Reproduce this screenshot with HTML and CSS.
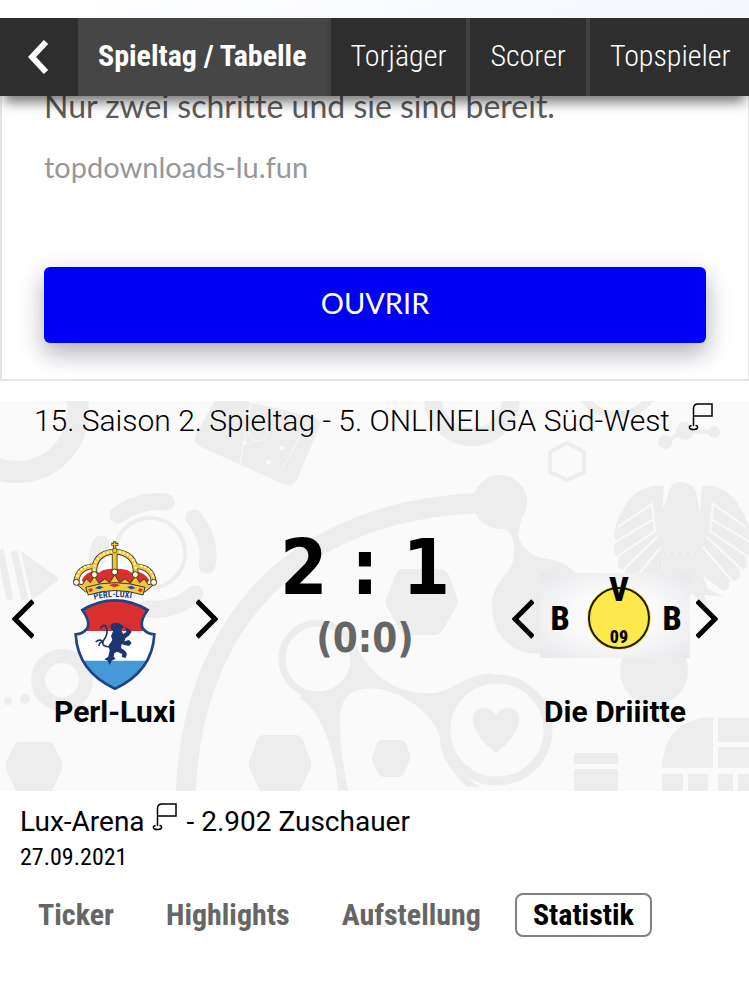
FILE: index.html
```html
<!DOCTYPE html>
<html lang="de">
<head>
    <meta charset="UTF-8">
    <meta name="viewport" content="width=device-width, initial-scale=1.0">
    <title>Perl-Luxi - Die Driiitte | Spieltag</title>
    <link rel="stylesheet" href="styles.css">
</head>
<body>
    <svg class="sprite" aria-hidden="true">
        <symbol id="flag" viewBox="0 0 25 28">
            <path d="M5.5 23V5.500Q5.500 1 10 1H24V13H6" fill="none" stroke="#000" stroke-width="1.500"/>
            <path d="M3.500 22.500C1 23 .5 25 2.500 26C4.500 27 8.500 26.500 9.500 25C10 23.500 9 22.500 7.500 22.500" fill="none" stroke="#000" stroke-width="1.500"/>
        </symbol>
        <symbol id="prev" viewBox="0 0 22 40">
            <path d="M21 2L3 20L21 38" fill="none" stroke="#000" stroke-width="5"/>
        </symbol>
        <symbol id="next" viewBox="0 0 22 40">
            <path d="M1 2L19 20L1 38" fill="none" stroke="#000" stroke-width="5"/>
        </symbol>
    </svg>

    <header class="topbar">
        <button class="back" type="button" aria-label="Zurück">
            <svg width="22" height="34" viewBox="0 0 22 34"><path d="M18 2L4 17L18 32" fill="none" stroke="#fff" stroke-width="6"/></svg>
        </button>
        <nav class="main-nav">
            <a class="active" href="#">Spieltag / Tabelle</a>
            <a href="#">Torjäger</a>
            <a href="#">Scorer</a>
            <a href="#">Topspieler</a>
        </nav>
    </header>

    <aside class="ad">
        <p class="ad-text">Nur zwei schritte und sie sind bereit.</p>
        <p class="ad-url">topdownloads-lu.fun</p>
        <button class="ad-button" type="button">OUVRIR</button>
    </aside>

    <section class="match">
        <svg class="pattern" viewBox="0 0 749 390" preserveAspectRatio="xMidYMid slice" aria-hidden="true">
            <g fill="none" stroke="#ededed">
                <circle cx="17" cy="10" r="61" stroke-width="22"/>
                <circle cx="472" cy="-3" r="39" stroke-width="18"/>
                <circle cx="617" cy="-28" r="42" stroke-width="8"/>
                <circle cx="150" cy="152" r="35" stroke-width="4"/>
                <path d="M118 114Q140 98 166 101M194 117Q212 140 207 164M195 193Q174 211 146 208M101 172Q93 158 101 143" stroke-width="17" stroke-linecap="round"/>
                <circle cx="62" cy="279" r="24" stroke-width="14"/>
                <path d="M186 392C190 250 270 112 478 102" stroke-width="20"/>
                <path d="M567 42L584 51V71L567 79L550 71V51Z" stroke-width="4" stroke-linejoin="round"/>
                <circle cx="497" cy="329" r="51" stroke-width="9"/>
                <path d="M665 41L684 30L714 31" stroke-width="4"/>
                <path d="M0 148L10 199M14 150L25 199" stroke-width="7"/>
            </g>
            <g fill="#ededed">
                <path d="M218 -6L314 16Q322 19 319 26L297 79Q292 87 283 83L199 45Q192 41 196 33Z"/>
                <path d="M21 150L57 176Q60 179 56 181L32 199Z"/>
                <circle cx="8" cy="300" r="4"/>
                <circle cx="25" cy="298" r="5"/>
                <circle cx="500" cy="101" r="27"/>
                <path d="M502 126C514 132 516 144 513 160C510 175 492 180 492 205C492 235 512 253 540 253C570 253 588 230 588 205C588 175 565 160 548 158C530 156 520 145 518 133L522 115Z"/>
                <path d="M402 168H440Q446 168 449 174L457 197Q459 201 456 206L443 229Q440 234 434 234H409Q403 234 400 229L387 206Q384 201 387 196L396 173Q398 168 402 168Z"/>
                <path d="M264 334H296Q300 334 303 339L310 358Q312 363 310 368L300 390H260L250 368Q248 363 250 358L257 339Q259 334 264 334Z"/>
                <path d="M382 339H400Q404 339 406 342L410 354Q411 358 409 361L404 372Q402 376 398 376H384Q380 376 378 372L373 361Q371 358 373 354L377 342Q379 339 382 339Z"/>
                <path d="M20 341H48Q52 341 54 345L62 361Q63 365 62 368L52 390H16L6 368Q5 365 6 361L14 345Q16 341 20 341Z"/>
                <path transform="translate(240 119) scale(.3333)" d="M350 380C400 480 480 520 570 520C630 520 680 460 760 460V485C680 490 620 560 620 640C620 700 650 760 720 800H680C620 740 600 700 600 650C570 560 460 505 390 505C320 505 300 550 300 600C300 680 310 740 325 812H295C285 700 250 580 180 535L235 420Z"/>
                <path d="M496 352Q473 334 473 319Q473 307 484 307Q492 307 496 314Q500 307 508 307Q519 307 519 319Q519 334 496 352Z"/>
                <circle cx="665" cy="41" r="7"/>
                <circle cx="685" cy="30" r="9"/>
                <circle cx="714" cy="31" r="6"/>
                <circle cx="654" cy="270" r="34"/>
                <path d="M574 352H618V363H574ZM574 368H618V390H574Z"/>
                <path d="M713 316V367H662Q664 318 713 316ZM718 317H749V341H718ZM718 346H749V367H718ZM662 373H683V390H662ZM688 373H708V390H688ZM718 373H733V390H718ZM738 373H749V390H738Z"/>
                <!-- eagle -->
                <path d="M667 99Q669 81 680 81Q695 82 697 96L700 112V168L708 188L724 196L704 194L708 206L692 192L681 204L672 192L656 206L660 192L642 196L658 186L663 168L660 112Z"/>
                <path d="M664 85Q636 82 622 110Q614 124 614 137L618 140Q612 144 615 154L620 156Q615 162 620 168L626 169Q622 176 630 180L636 181Q634 188 642 190L662 172V112Z"/>
                <path d="M702 85Q728 82 742 110Q750 124 752 137L747 140Q753 144 750 154L745 156Q750 162 745 168L739 169Q743 176 735 180L729 181Q731 188 723 190L700 172V112Z"/>
            </g>
            <circle cx="318" cy="258" r="36" fill="#fafafa" stroke="#ededed" stroke-width="7"/>
            <g fill="none" stroke="#fafafa">
                <path d="M252 -2L240 63M281 70L308 20" stroke-width="1"/>
                <circle cx="258" cy="30" r="10"/>
                <path d="M244 42H245M281 47H282M268 61H269" stroke-width="4" stroke-linecap="round"/>
                <path d="M668 112H698M666 122H698M666 132H698M666 142H698M667 152H698" stroke-width="1" stroke-dasharray="2 6"/>
                <path d="M618 126L652 103L655 130L618 155M654 118L615 141M657 136L623 169M661 146L632 181M746 126L713 103L710 130L747 155M711 118L750 141M707 136L742 169M703 146L733 181" stroke-width="2"/>
            </g>
        </svg>

        <h1 class="match-title">
            15. Saison 2. Spieltag - 5. ONLINELIGA Süd-West
            <svg class="flag"><use href="#flag"/></svg>
        </h1>

        <div class="scoreboard">
            <div class="team">
                <div class="team-row">
                    <button class="arrow" type="button" aria-label="Vorheriges Spiel Perl-Luxi"><svg><use href="#prev"/></svg></button>
                    <svg class="crest" viewBox="222 30 252 450" role="img" aria-label="Perl-Luxi">
                        <!-- crown -->
                        <path d="M248 150Q270 116 300 128Q322 112 348 112Q376 112 397 128Q428 118 451 150L430 180H268Z" fill="#d9302f"/>
                        <path d="M300 104Q320 94 342 92V116Q318 116 302 124ZM354 92Q376 95 396 105V124Q380 116 354 116Z" fill="#fff"/>
                        <g fill="none" stroke="#3d3420" stroke-width="17">
                            <path d="M232 156Q235 112 286 108M464 156Q461 112 410 108"/>
                            <path d="M286 130Q282 70 347 64Q412 70 410 130M347 66V126"/>
                        </g>
                        <g fill="none" stroke="#edc63c" stroke-width="12">
                            <path d="M232 156Q235 112 286 108M464 156Q461 112 410 108"/>
                            <path d="M286 130Q282 70 347 64Q412 70 410 130M347 66V126"/>
                        </g>
                        <g fill="none" stroke="#fff3b4" stroke-width="7" stroke-linecap="round" stroke-dasharray="1 11">
                            <path d="M232 150Q236 110 280 106M464 150Q460 110 416 106"/>
                            <path d="M286 120Q284 70 347 64Q410 70 410 120"/>
                        </g>
                        <path d="M230 160L250 164L262 146L274 158L286 138L300 160L318 146L332 158L347 134L362 158L378 146L394 160L410 138L422 158L436 146L448 164L468 160L438 186Q348 156 260 186Z" fill="#edc63c" stroke="#3d3420" stroke-width="3"/>
                        <path d="M260 172Q348 144 438 172L432 195Q348 168 268 195Z" fill="#f0cc48" stroke="#3d3420" stroke-width="3"/>
                        <path d="M288 175L300 167L314 171L302 178ZM384 171L398 167L410 175L396 178Z" fill="#244a8c"/>
                        <path d="M330 166L347 160L364 166L347 172ZM268 178L278 174L282 182L272 187ZM416 182L422 174L432 178L426 187Z" fill="#d9302f"/>
                        <g fill="#fff8dc" stroke="#3d3420" stroke-width="3">
                            <circle cx="232" cy="157" r="9"/><circle cx="286" cy="134" r="9"/><circle cx="347" cy="126" r="9"/><circle cx="409" cy="134" r="9"/><circle cx="464" cy="157" r="9"/>
                        </g>
                        <path d="M347 34V62M337 43H358" stroke="#3d3420" stroke-width="9"/>
                        <path d="M347 36V62M339 43H356" stroke="#edc63c" stroke-width="4"/>
                        <circle cx="347" cy="62" r="7" fill="#edc63c" stroke="#3d3420" stroke-width="2"/>
                        <!-- name band -->
                        <path id="band" d="M286 209Q346 194 412 208" fill="none"/>
                        <text class="crest-text"><textPath href="#band">PERL-LUXI</textPath></text>
                        <!-- shield -->
                        <clipPath id="shield"><path d="M250 240Q298 211 348 211Q398 211 446 240Q420 276 432 296Q444 312 466 313Q460 424 348 476Q236 424 230 313Q252 312 264 296Q276 276 250 240Z"/></clipPath>
                        <g clip-path="url(#shield)">
                            <path d="M222 200H474V303H222Z" fill="#d9302f"/>
                            <path d="M222 303H474V392H222Z" fill="#fff"/>
                            <path d="M222 392H474V480H222Z" fill="#4599d6"/>
                        </g>
                        <path d="M250 240Q298 211 348 211Q398 211 446 240Q420 276 432 296Q444 312 466 313Q460 424 348 476Q236 424 230 313Q252 312 264 296Q276 276 250 240Z" fill="none" stroke="#1e4389" stroke-width="8"/>
                        <!-- lion -->
                        <path d="M336 281L350 278L364 281L376 292L366 298L372 312L382 306L378 292L388 296L398 305L391 316L380 324L376 334L390 330L398 339L390 348L376 345L368 342L366 354L378 362L384 372L380 384L368 381L370 372L354 365L346 370L344 380L350 386L338 392L332 405L326 392L316 388L328 380L332 360L328 348L340 330L336 318L342 304L334 294Z" fill="#1b3672"/>
                        <path d="M334 350Q308 352 312 334Q330 310 322 290Q312 280 304 296M312 334Q300 326 290 336M312 336Q300 336 300 348" fill="none" stroke="#1b3672" stroke-width="5"/>
                    </svg>
                    <button class="arrow" type="button" aria-label="Nächstes Spiel Perl-Luxi"><svg><use href="#next"/></svg></button>
                </div>
                <h2 class="team-name">Perl-Luxi</h2>
            </div>

            <div class="score">
                <div class="result">2 : 1</div>
                <div class="halftime">(0:0)</div>
            </div>

            <div class="team">
                <div class="team-row away">
                    <button class="arrow" type="button" aria-label="Vorheriges Spiel Die Driiitte"><svg><use href="#prev"/></svg></button>
                    <svg class="badge" viewBox="0 0 150 85" role="img" aria-label="Die Driiitte">
                        <radialGradient id="shade" r="70%"><stop offset="40%" stop-color="#fafafb"/><stop offset="100%" stop-color="#e9e9ec"/></radialGradient>
                        <path d="M0 0H150V85H0Z" fill="url(#shade)"/>
                        <circle cx="79" cy="45" r="32" fill="#fde94b"/>
                        <circle cx="79" cy="45" r="30" fill="none" stroke="#1c1a08" stroke-width="2"/>
                        <g class="badge-text">
                            <text x="20" y="57">B</text>
                            <text x="132" y="57">B</text>
                            <text x="79" y="28">V</text>
                            <text class="year" x="79" y="70">09</text>
                        </g>
                    </svg>
                    <button class="arrow" type="button" aria-label="Nächstes Spiel Die Driiitte"><svg><use href="#next"/></svg></button>
                </div>
                <h2 class="team-name">Die Driiitte</h2>
            </div>
        </div>
    </section>

    <section class="info">
        <p class="stadium">Lux-Arena <svg class="flag"><use href="#flag"/></svg> - 2.902 Zuschauer</p>
        <p class="date">27.09.2021</p>
    </section>

    <nav class="tabs">
        <a href="#">Ticker</a>
        <a href="#">Highlights</a>
        <a href="#">Aufstellung</a>
        <a class="active" href="#">Statistik</a>
    </nav>
</body>
</html>
```
FILE: styles.css
```css
* {
    box-sizing: border-box;
}
body {
    margin: 0;
    padding-top: 18px;
    background: #fff linear-gradient(90deg, #fff, #f5f7ff) no-repeat;
    background-size: 100% 18px;
    color: #000;
    font-family: Roboto, sans-serif;
    overflow-x: hidden;
}
h1, h2, p {
    margin: 0;
}
a {
    text-decoration: none;
}
button {
    border: none;
    padding: 0;
    cursor: pointer;
}
.sprite {
    display: none;
}

/* top navigation */
.topbar {
    position: relative;
    z-index: 2;
    display: flex;
    height: 78px;
    background: #2e2e2e;
    box-shadow: 0 10px 12px -4px rgba(0, 0, 0, 0.55);
}
.back {
    flex: 0 0 78px;
    display: flex;
    align-items: center;
    justify-content: center;
    background: none;
}
.main-nav {
    display: flex;
    flex: 1;
    overflow: hidden;
    font-family: "Roboto Condensed", Roboto, sans-serif;
    font-size: 30px;
    font-weight: 300;
    line-height: 76px;
    white-space: nowrap;
}
.main-nav a {
    padding: 0 20px;
    border-right: 4px solid #424242;
    color: #fff;
}
.main-nav a:last-child {
    border-right: none;
}
.main-nav .active {
    background: #464646;
    font-weight: 700;
}

/* ad */
.ad {
    margin-top: -26px;
    padding: 18px 42px 36px;
    border: 2px solid #e4e4e6;
    border-right-width: 1px;
    font-family: Lato, sans-serif;
    font-variant-ligatures: none;
}
.ad-text {
    color: #5c5c5c;
    font-size: 32px;
    line-height: 32px;
}
.ad-url {
    margin: 28px 0 83px;
    color: #979797;
    font-size: 29px;
    line-height: 34px;
}
.ad-button {
    display: block;
    width: 100%;
    height: 76px;
    padding-bottom: 6px;
    border-radius: 6px;
    background: #0000f5;
    box-shadow: 0 10px 24px rgba(20, 20, 50, 0.35);
    color: #fff;
    font-family: Lato, sans-serif;
    font-size: 29px;
}

/* match */
.match {
    position: relative;
    margin-top: 20px;
    padding-bottom: 61px;
    background: #fafafa;
    overflow: hidden;
}
.pattern {
    position: absolute;
    top: 0;
    left: 0;
    width: 100%;
    height: 100%;
}
.match-title,
.scoreboard {
    position: relative;
}
.match-title {
    display: flex;
    align-items: flex-start;
    justify-content: center;
    gap: 18px;
    padding-right: 2px;
    font-size: 30px;
    font-weight: 300;
    line-height: 40px;
    white-space: nowrap;
}
.flag {
    width: 25px;
    height: 28px;
}
.match-title .flag {
    margin-top: 2px;
}
.scoreboard {
    display: flex;
    justify-content: space-between;
    padding: 86px 31px 0 12px;
}
.team {
    width: 206px;
    padding-top: 13px;
}
.team-row {
    display: flex;
    align-items: center;
    justify-content: space-between;
    height: 150px;
}
.away {
    justify-content: center;
    gap: 6px;
}
.arrow {
    width: 22px;
    height: 48px;
    padding-top: 8px;
    background: none;
}
.arrow svg {
    display: block;
    width: 22px;
    height: 40px;
}
.crest {
    width: 84px;
    height: 150px;
}
.crest-text {
    fill: #1e4389;
    font-family: "Roboto Condensed", Roboto, sans-serif;
    font-size: 26px;
    font-weight: 700;
}
.badge {
    width: 150px;
    height: 85px;
    overflow: visible;
}
.badge-text {
    font-family: "Roboto Condensed", Roboto, sans-serif;
    font-size: 34px;
    font-weight: 800;
    text-anchor: middle;
}
.badge-text .year {
    font-size: 18px;
}
.team-name {
    padding-top: 4px;
    font-size: 30px;
    font-weight: 700;
    line-height: 36px;
    text-align: center;
}
.score {
    font-family: "DejaVu Sans Condensed", "Noto Sans", sans-serif;
    font-weight: 700;
    text-align: center;
    white-space: nowrap;
}
.result {
    font-size: 76px;
    line-height: 82px;
}
.halftime {
    margin-top: 4px;
    color: #666;
    font-size: 40px;
    line-height: 50px;
}

/* details */
.info {
    padding: 11px 20px 0;
}
.stadium {
    font-size: 28px;
    line-height: 40px;
}
.stadium .flag {
    margin-right: 3px;
}
.date {
    font-family: "Roboto Condensed", Roboto, sans-serif;
    font-size: 24px;
    line-height: 30px;
}
.tabs {
    display: flex;
    gap: 16px;
    padding: 21px 20px;
    font-family: "Roboto Condensed", Roboto, sans-serif;
    font-size: 30px;
    font-weight: 700;
    line-height: 40px;
}
.tabs a {
    padding: 0 16px;
    border: 2px solid transparent;
    border-radius: 8px;
    color: #666;
}
.tabs .active {
    border-color: #808080;
    color: #000;
}
```
